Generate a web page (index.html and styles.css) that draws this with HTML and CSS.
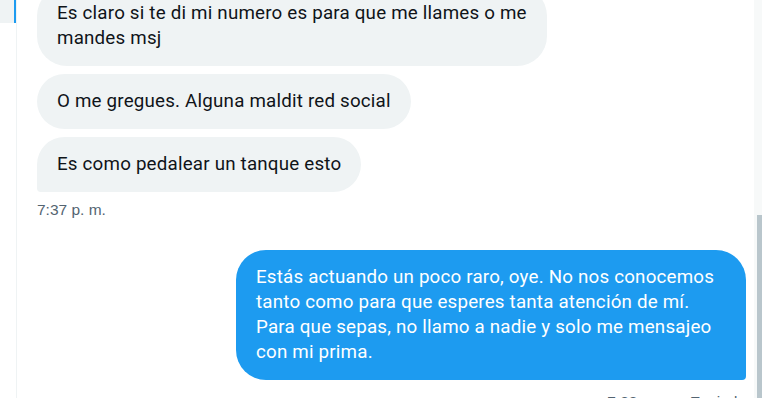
FILE: index.html
```html
<!DOCTYPE html>
<html lang="es">
<head>
<meta charset="utf-8">
<title>Mensajes</title>
<link rel="stylesheet" href="styles.css">
</head>
<body>
<div class="app">
  <aside class="sidebar">
    <div class="selected"></div>
  </aside>
  <main class="main">
    <div class="thread">
      <div class="group in">
        <div class="bubble in-bubble">Es claro si te di mi numero es para que me llames o me mandes msj</div>
        <div class="bubble in-bubble">O me gregues. Alguna maldit red social</div>
        <div class="bubble in-bubble last-in">Es como pedalear un tanque esto</div>
        <div class="time">7:37 p. m.</div>
      </div>
      <div class="group out">
        <div class="bubble out-bubble">Estás actuando un poco raro, oye. No nos conocemos tanto como para que esperes tanta atención de mí. Para que sepas, no llamo a nadie y solo me mensajeo con mi prima.</div>
        <div class="time time-out">7:38 p. m. · Enviado</div>
      </div>
    </div>
  </main>
  <div class="scrollbar"><div class="thumb"></div></div>
</div>
</body>
</html>
```
FILE: styles.css
```css
* { box-sizing: border-box; }
html, body {
  margin: 0;
  padding: 0;
  background: #ffffff;
  overflow: hidden;
}
.app {
  display: flex;
  height: 398px;
  width: 762px;
}
.sidebar {
  width: 17px;
  flex: none;
  border-right: 1px solid #eff3f4;
}
.selected {
  height: 23px;
  background: #eff3f4;
  border-right: 2px solid #1d9bf0;
}
.main {
  flex: 1;
  padding: 0 8px 0 20px;
  overflow: hidden;
}
.thread {
  margin-top: -14px;
  display: flex;
  flex-direction: column;
}
.group {
  display: flex;
  flex-direction: column;
  gap: 8px;
}
.group.in { align-items: flex-start; }
.group.out { align-items: flex-end; margin-top: 30px; }
.bubble {
  max-width: 510px;
  padding: 15px 20px;
  border-radius: 30px;
  font-family: Roboto, "Noto Sans", sans-serif;
  font-size: 18.75px;
  line-height: 25px;
  letter-spacing: 0.2px;
}
.in-bubble {
  background: #eff3f4;
  color: #0f1419;
}
.last-in { border-bottom-left-radius: 4px; }
.out-bubble {
  background: #1d9bf0;
  color: #ffffff;
  border-bottom-right-radius: 4px;
}
.time {
  font-family: "Liberation Sans", Arial, sans-serif;
  font-size: 15.5px;
  line-height: 20px;
  color: #536471;
}
.time-out { margin-top: 4px; }
.scrollbar {
  width: 8px;
  flex: none;
  background: #f7f9f9;
  padding: 215px 0 0 3px;
  display: flex;
}
.thumb {
  flex: 1;
  background: #b9c6cc;
}
```
